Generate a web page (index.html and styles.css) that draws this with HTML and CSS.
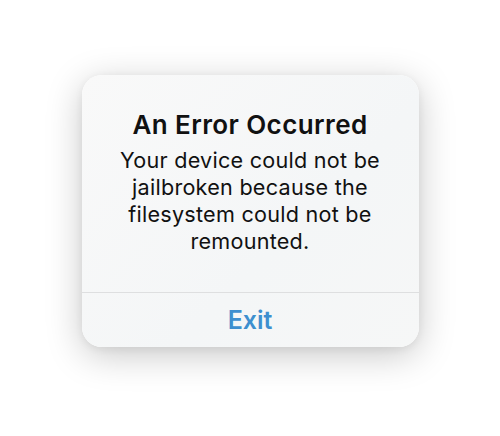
FILE: index.html
```html
<!DOCTYPE html>
<html>
<head>
<meta charset="utf-8">
<link rel="stylesheet" href="styles.css">
</head>
<body>
<div class="alert">
  <div class="content">
    <h1 class="title">An Error Occurred</h1>
    <p class="message">Your device could not be jailbroken because the filesystem could not be remounted.</p>
  </div>
  <div class="actions">
    <button class="action">Exit</button>
  </div>
</div>
</body>
</html>
```
FILE: styles.css
```css
html, body {
  margin: 0;
  padding: 0;
  background: #ffffff;
}
body {
  width: 500px;
  height: 436px;
  display: flex;
  justify-content: center;
  align-items: flex-start;
  padding-top: 75px;
  box-sizing: border-box;
  font-family: Inter, "Noto Sans", sans-serif;
}
.alert {
  width: 337px;
  height: 272px;
  border-radius: 20px;
  background: linear-gradient(135deg, #f9f9f9 0%, #f4f6f7 60%, #f6f7f7 100%);
  box-shadow: 0 8px 36px rgba(0, 0, 0, 0.22), 0 2px 8px rgba(0, 0, 0, 0.06);
  display: flex;
  flex-direction: column;
  overflow: hidden;
}
.content {
  flex: 1;
  padding: 35px 10px 0;
  text-align: center;
}
.title {
  margin: 0;
  font-size: 26px;
  font-weight: 600;
  color: #111;
  line-height: 30px;
  letter-spacing: 0.4px;
}
.message {
  margin: 7px 0 0;
  font-size: 21.6px;
  line-height: 27px;
  color: #111;
  font-weight: 400;
  letter-spacing: 0.25px;
}
.actions {
  height: 54px;
  border-top: 1px solid #dedfe0;
  display: flex;
}
.action {
  flex: 1;
  border: 0;
  background: transparent;
  font-family: inherit;
  font-size: 25px;
  font-weight: 600;
  color: #3d8fcf;
  padding: 0;
}
```
